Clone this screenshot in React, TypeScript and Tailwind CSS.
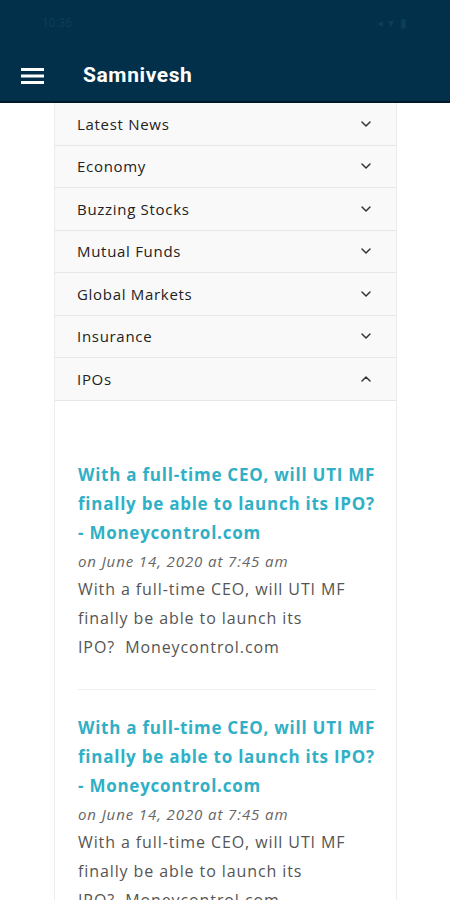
import { ChevronDown, ChevronUp } from 'lucide-react';

const sections = ['Latest News', 'Economy', 'Buzzing Stocks', 'Mutual Funds', 'Global Markets', 'Insurance'];

const posts = [1, 2];

export default function App() {
  return (
    <div className="w-[450px] h-[900px] overflow-hidden bg-white font-['Open_Sans',sans-serif]">
      <header className="h-[103px] bg-[#02304a] border-b-2 border-[#01182a]">
        <div className="h-[46px] flex items-center justify-between px-[42px] text-[12px] text-[#0b3e58] font-['Roboto',sans-serif]">
          <span>10:36</span>
          <span className="tracking-widest">◂ ▾ ▮</span>
        </div>
        <div className="flex items-center h-[56px] pl-[21px] pt-[3px]">
          <svg width="24" height="18" viewBox="0 0 24 18">
            <rect x="0" y="1" width="23" height="3" fill="#fff" />
            <rect x="0" y="7.5" width="23" height="3" fill="#fff" />
            <rect x="0" y="14" width="23" height="3" fill="#fff" />
          </svg>
          <span className="ml-[38px] text-white text-[21px] tracking-[0.6px] font-bold font-['Roboto',sans-serif]">Samnivesh</span>
        </div>
      </header>

      <div className="mx-[54px] w-[343px] border-x border-[#ececec]">
        {sections.map((s) => (
          <div key={s} className="h-[42.5px] flex items-center justify-between px-[22px] bg-[#f9f9f9] border-b border-[#e6e6e6] text-[15px] tracking-[0.7px] text-[#222]">
            <span>{s}</span>
            <ChevronDown size={16} strokeWidth={2.2} className="text-[#333]" />
          </div>
        ))}
        <div className="h-[42.5px] flex items-center justify-between px-[22px] bg-[#f9f9f9] border-b border-[#e6e6e6] text-[15px] tracking-[0.7px] text-[#222]">
          <span>IPOs</span>
          <ChevronUp size={16} strokeWidth={2.2} className="text-[#333]" />
        </div>

        <div className="pl-[23px] pr-[20px] pt-[59px] pb-[40px] bg-white">
          {posts.map((p, i) => (
            <div key={p} className={i > 0 ? 'border-t border-[#eeeeee] pt-[23px] mt-[27px]' : ''}>
              <div className="text-[17px] leading-[29px] font-bold text-[#2fb0c6] tracking-[0.75px] whitespace-nowrap">
                <div>With a full-time CEO, will UTI MF</div>
                <div>finally be able to launch its IPO?</div>
                <div>- Moneycontrol.com</div>
              </div>
              <div className="text-[15px] leading-[28px] italic text-[#666] tracking-[0.9px]">on June 14, 2020 at 7:45 am</div>
              <div className="text-[16px] leading-[29px] text-[#555] tracking-[0.9px] whitespace-nowrap">
                <div>With a full-time CEO, will UTI MF</div>
                <div>finally be able to launch its</div>
                <div>IPO?&nbsp; Moneycontrol.com</div>
              </div>
            </div>
          ))}
        </div>
      </div>
    </div>
  );
}
